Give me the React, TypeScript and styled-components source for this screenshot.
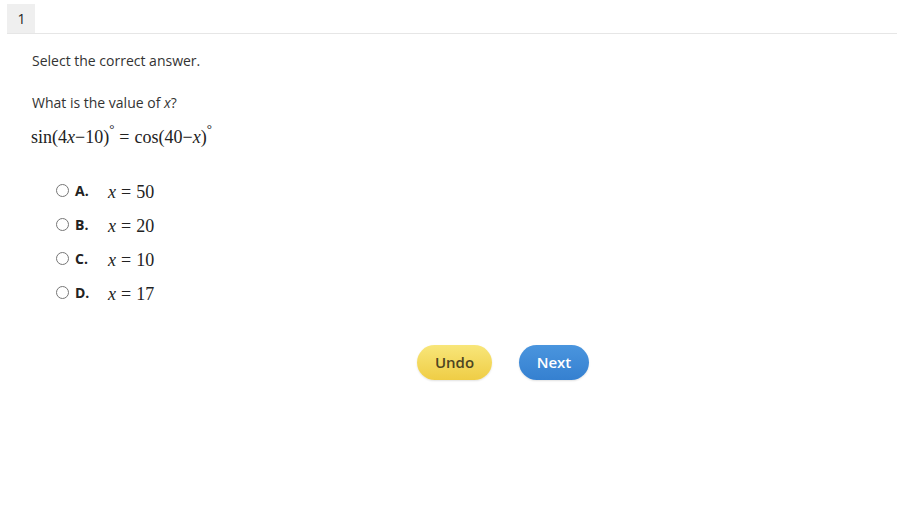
import styled, { createGlobalStyle } from "styled-components";

const GlobalStyle = createGlobalStyle`
  body {
    margin: 0;
    background: #ffffff;
    font-family: "Open Sans", "Noto Sans", sans-serif;
    font-size: 14px;
    color: #333333;
  }
`;

const SPage = styled.div`
  width: 897px;
  height: 516px;
`;

const SHeader = styled.div`
  margin: 4px 0 0 7px;
  border-bottom: 1px solid #e6e6e6;
  display: flex;
`;

const STab = styled.div`
  width: 28px;
  height: 29px;
  padding-left: 1px;
  box-sizing: border-box;
  background: #efefef;
  display: flex;
  align-items: center;
  justify-content: center;
  font-size: 14px;
  color: #222;
`;

const SContent = styled.div`
  padding: 17px 0 0 32px;
`;

const SText = styled.p<{ $gap: number }>`
  margin: 0 0 ${(p) => p.$gap}px;
  line-height: 20px;
`;

const SMath = styled.span`
  font-family: "Liberation Serif", "DejaVu Serif", serif;
  font-size: 18px;
  color: #222;
  white-space: nowrap;

  i {
    font-style: italic;
  }

  sup {
    font-size: 13px;
    position: relative;
    top: -3px;
  }

  .op {
    margin: 0 5px;
  }
`;

const SFormula = styled.div`
  height: 32px;
  display: flex;
  align-items: center;
  margin-left: -1px;
`;

const SOptions = styled.div`
  margin: 23px 0 0 24px;
  display: flex;
  flex-direction: column;
`;

const SOption = styled.label`
  height: 34px;
  display: flex;
  align-items: center;

  input {
    margin: 0 6px 0 0;
    width: 13px;
    height: 13px;
    position: relative;
    top: -2px;
  }
`;

const SLetter = styled.span`
  font-weight: 700;
  width: 33px;
  color: #222;
  position: relative;
  top: -2px;
`;

const SButtons = styled.div`
  margin: 34px 0 0 385px;
  display: flex;
  gap: 27px;
`;

const SButton = styled.button<{ $kind: "undo" | "next" }>`
  height: 35px;
  width: ${(p) => (p.$kind === "undo" ? 75 : 70)}px;
  border: none;
  border-radius: 18px;
  font-family: "Open Sans", "Noto Sans", sans-serif;
  font-size: 15px;
  font-weight: 600;
  padding: 0 0 2px;
  cursor: pointer;
  color: ${(p) => (p.$kind === "undo" ? "#4d4522" : "#ffffff")};
  background: ${(p) =>
    p.$kind === "undo"
      ? "linear-gradient(#f8e67a, #efcd45)"
      : "linear-gradient(#4a95de, #3580d0)"};
  box-shadow: 0 1px 2px rgba(0, 0, 0, 0.12);
`;

const options = [
  { letter: "A.", value: "50" },
  { letter: "B.", value: "20" },
  { letter: "C.", value: "10" },
  { letter: "D.", value: "17" },
];

function App() {
  return (
    <SPage>
      <GlobalStyle />
      <SHeader>
        <STab>1</STab>
      </SHeader>
      <SContent>
        <SText $gap={22}>Select the correct answer.</SText>
        <SText $gap={7}>
          What is the value of <i>x</i>?
        </SText>
        <SFormula>
          <SMath>
            sin(4<i>x</i>−10)<sup>°</sup>
            <span className="op">=</span>
            cos(40−<i>x</i>)<sup>°</sup>
          </SMath>
        </SFormula>
        <SOptions>
          {options.map((o) => (
            <SOption key={o.letter}>
              <input type="radio" name="answer" />
              <SLetter>{o.letter}</SLetter>
              <SMath>
                <i>x</i>
                <span className="op">=</span>
                {o.value}
              </SMath>
            </SOption>
          ))}
        </SOptions>
        <SButtons>
          <SButton $kind="undo">Undo</SButton>
          <SButton $kind="next">Next</SButton>
        </SButtons>
      </SContent>
    </SPage>
  );
}

export default App;
